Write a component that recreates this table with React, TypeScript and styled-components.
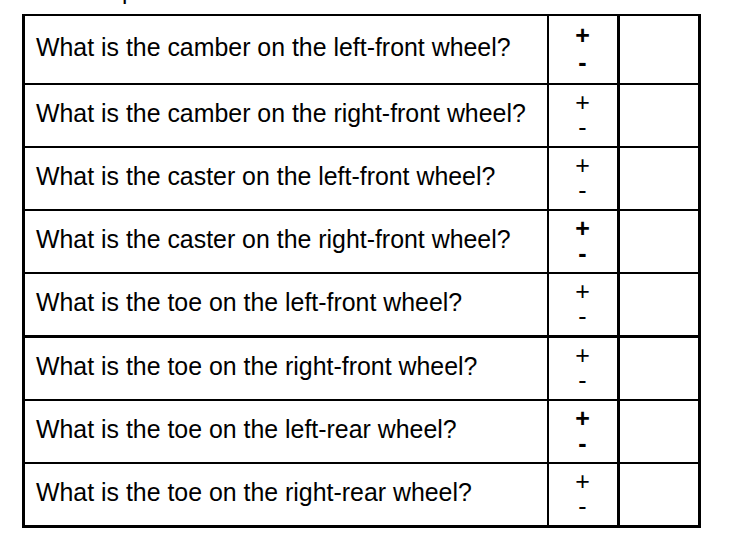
import React from "react";
import styled, { createGlobalStyle } from "styled-components";

const Global = createGlobalStyle`
  html, body { margin: 0; padding: 0; background: #fff; }
  body { font-family: "Liberation Sans", Arial, sans-serif; color: #000; }
`;

const Page = styled.div`
  width: 752px;
  height: 538px;
  padding-left: 22px;
  box-sizing: border-box;
  overflow: hidden;
`;

const Caption = styled.div`
  height: 14px;
  overflow: hidden;
`;

const CaptionClip = styled.div`
  height: 4px;
  overflow: hidden;
`;

const CaptionText = styled.div`
  margin-top: -22px;
  margin-left: 100px;
  font-size: 24px;
  line-height: 28px;
  white-space: nowrap;
`;

const Table = styled.div`
  width: 679px;
  box-sizing: border-box;
  border-style: solid;
  border-color: #000;
  border-width: 2px 3px 3px 3px;
  display: flex;
  flex-direction: column;
`;

const Row = styled.div<{ $h: number; $line: number }>`
  display: grid;
  grid-template-columns: 524px 71px 78px;
  height: ${(p) => p.$h + p.$line}px;
  box-sizing: border-box;
  border-top: ${(p) => p.$line}px solid #000;
`;

const Question = styled.div`
  border-right: 2px solid #000;
  font-size: 24.9px;
  line-height: 28px;
  display: flex;
  align-items: center;
  padding: 0 0 5px 11px;
  white-space: nowrap;
`;

const Sign = styled.div`
  border-right: 3px solid #000;
  display: flex;
  align-items: center;
  justify-content: center;
  padding: 0 1px 2px 0;
`;

const SignText = styled.div<{ $bold: boolean; $lh: number }>`
  white-space: pre-line;
  text-align: center;
  font-size: 25px;
  line-height: ${(p) => p.$lh}px;
  font-weight: ${(p) => (p.$bold ? 700 : 400)};
`;

const Blank = styled.div``;

const rows = [
  { q: "What is the camber on the left-front wheel?", h: 67, line: 0, bold: true, lh: 27 },
  { q: "What is the camber on the right-front wheel?", h: 61, line: 2, bold: false, lh: 25 },
  { q: "What is the caster on the left-front wheel?", h: 61, line: 2, bold: false, lh: 25 },
  { q: "What is the caster on the right-front wheel?", h: 61, line: 2, bold: true, lh: 25 },
  { q: "What is the toe on the left-front wheel?", h: 61, line: 2, bold: false, lh: 25 },
  { q: "What is the toe on the right-front wheel?", h: 61, line: 3, bold: false, lh: 25 },
  { q: "What is the toe on the left-rear wheel?", h: 61, line: 2, bold: true, lh: 25 },
  { q: "What is the toe on the right-rear wheel?", h: 61, line: 2, bold: false, lh: 25 },
];

export default function App() {
  return (
    <Page>
      <Global />
      <Caption>
        <CaptionClip>
          <CaptionText>p</CaptionText>
        </CaptionClip>
      </Caption>
      <Table>
        {rows.map((r) => (
          <Row key={r.q} $h={r.h} $line={r.line}>
            <Question>{r.q}</Question>
            <Sign>
              <SignText $bold={r.bold} $lh={r.lh}>
                {"+\n-"}
              </SignText>
            </Sign>
            <Blank />
          </Row>
        ))}
      </Table>
    </Page>
  );
}
